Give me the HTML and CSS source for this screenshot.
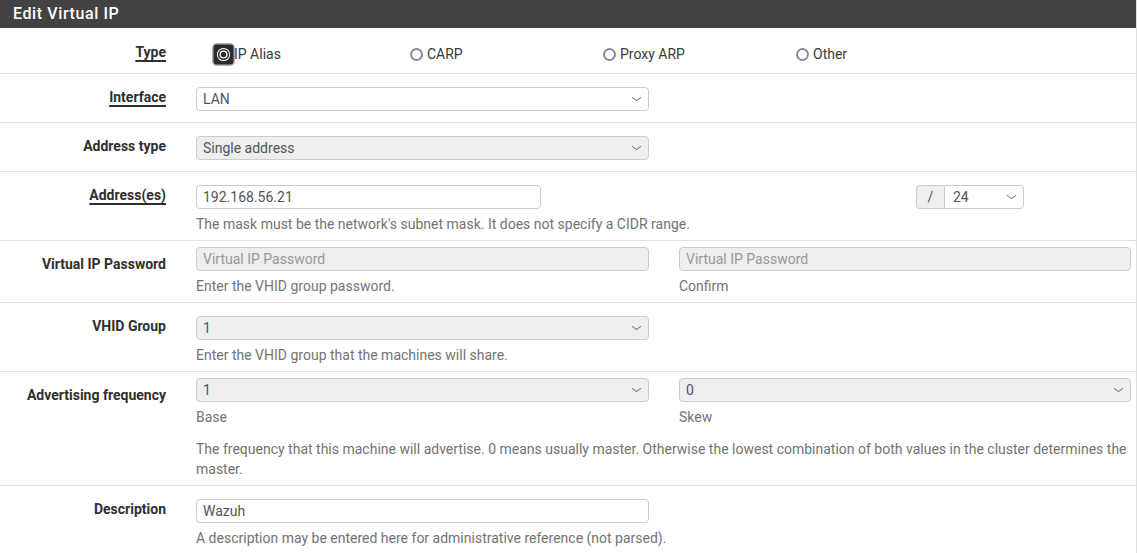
FILE: index.html
```html
<!DOCTYPE html>
<html>
<head>
<meta charset="utf-8">
<link rel="stylesheet" href="styles.css">
</head>
<body>
<div class="panel">
  <div class="panel-heading">Edit Virtual IP</div>

  <div class="row row-type">
    <div class="lbl lbl-type"><span class="req">Type</span></div>
    <div class="ctl ctl-type">
      <label class="radio"><svg class="dot-focus" width="23" height="23" viewBox="0 0 23 23"><rect x="0.75" y="0.75" width="21.5" height="21.5" rx="4" fill="#2b2b2b" stroke="#b3b3b3" stroke-width="1.5"/><circle cx="11.5" cy="11.5" r="6.6" fill="#fff"/><circle cx="11.5" cy="11.5" r="5.6" fill="#2b2b2b"/><circle cx="11.5" cy="11.5" r="4" fill="#fff"/><circle cx="11.5" cy="11.5" r="2.7" fill="#2b2b2b"/></svg>IP Alias</label>
      <label class="radio"><span class="dot"></span>CARP</label>
      <label class="radio"><span class="dot"></span>Proxy ARP</label>
      <label class="radio"><span class="dot"></span>Other</label>
    </div>
  </div>

  <div class="row">
    <div class="lbl"><span class="req">Interface</span></div>
    <div class="ctl">
      <div class="one">
        <div class="field select">LAN</div>
      </div>
      <div class="gap"></div>
    </div>
  </div>

  <div class="row">
    <div class="lbl">Address type</div>
    <div class="ctl">
      <div class="one">
        <div class="field select disabled">Single address</div>
      </div>
      <div class="gap"></div>
    </div>
  </div>

  <div class="row">
    <div class="lbl"><span class="req">Address(es)</span></div>
    <div class="ctl">
      <div class="addr">
        <div class="field addr-input">192.168.56.21</div>
        <div class="mask">
          <span class="addon">/</span>
          <div class="field select mask-select">24</div>
        </div>
      </div>
      <div class="help">The mask must be the network's subnet mask. It does not specify a CIDR range.</div>
    </div>
  </div>

  <div class="row">
    <div class="lbl">Virtual IP Password</div>
    <div class="ctl ctl-tight">
      <div class="two">
        <div>
          <div class="field disabled placeholder">Virtual IP Password</div>
          <div class="help">Enter the VHID group password.</div>
        </div>
        <div>
          <div class="field disabled placeholder">Virtual IP Password</div>
          <div class="help">Confirm</div>
        </div>
      </div>
    </div>
  </div>

  <div class="row">
    <div class="lbl">VHID Group</div>
    <div class="ctl">
      <div class="one">
        <div class="field select disabled">1</div>
      </div>
      <div class="help">Enter the VHID group that the machines will share.</div>
    </div>
  </div>

  <div class="row">
    <div class="lbl">Advertising frequency</div>
    <div class="ctl ctl-tight">
      <div class="two">
        <div>
          <div class="field select disabled">1</div>
          <div class="help">Base</div>
        </div>
        <div>
          <div class="field select disabled">0</div>
          <div class="help">Skew</div>
        </div>
      </div>
      <div class="help help-wide">The frequency that this machine will advertise. 0 means usually master. Otherwise the lowest combination of both values in the cluster determines the master.</div>
    </div>
  </div>

  <div class="row">
    <div class="lbl">Description</div>
    <div class="ctl">
      <div class="one">
        <div class="field">Wazuh</div>
      </div>
      <div class="help">A description may be entered here for administrative reference (not parsed).</div>
    </div>
  </div>
</div>
</body>
</html>
```

FILE: styles.css
```css
* { box-sizing: border-box; }

html, body {
  margin: 0;
  padding: 0;
  background: #fff;
}

body {
  font-family: Roboto, "Liberation Sans", sans-serif;
  font-size: 14px;
  color: #333;
  overflow: hidden;
}

.panel {
  width: 1137px;
  border-right: 1px solid #ddd;
  min-height: 553px;
}

.panel-heading {
  height: 28px;
  background: #424242;
  color: #fff;
  font-size: 16px;
  font-weight: 500;
  letter-spacing: 0.6px;
  line-height: 28px;
  padding-left: 13px;
}

.row {
  display: grid;
  grid-template-columns: 196px 1fr;
  border-top: 1px solid #e3e3e3;
  padding-bottom: 6px;
}

.row-type {
  border-top: none;
  padding-bottom: 7px;
}

.lbl {
  padding: 13px 30px 0 0;
  text-align: right;
  font-weight: 700;
  line-height: 20px;
  color: #2f2f2f;
}

.lbl-type { padding-top: 14px; }

.req {
  text-decoration: underline;
  text-decoration-thickness: 1.5px;
  text-underline-offset: 3px;
}

.ctl {
  padding-top: 13px;
}

.ctl-tight { padding-top: 6px; }

.ctl-type {
  display: flex;
  padding-left: 21px;
  height: 38px;
  align-items: flex-end;
}

.radio {
  display: flex;
  align-items: center;
  width: 193px;
  height: 24px;
  line-height: 24px;
  color: #3a3a3a;
}

.dot {
  width: 13px;
  height: 13px;
  margin-right: 4px;
  border: 2px solid #8a8a96;
  border-radius: 50%;
  background: #fff;
  flex: none;
}

.dot-focus {
  flex: none;
  margin-left: -5px;
  margin-right: -1px;
}

.one { width: 453px; }

.gap { height: 5px; }

.two {
  display: grid;
  grid-template-columns: 453px 452px;
  column-gap: 30px;
}

.field {
  position: relative;
  height: 24px;
  line-height: 22px;
  border: 1px solid #ccc;
  border-radius: 4px;
  padding: 0 6px;
  color: #555;
  background: #fff;
  white-space: nowrap;
}

.field.disabled { background: #eee; }

.field.placeholder { color: #999; }

.select::after {
  content: "";
  position: absolute;
  right: 8px;
  top: 6px;
  width: 6px;
  height: 6px;
  border-right: 1px solid #6a6a6a;
  border-bottom: 1px solid #6a6a6a;
  transform: scaleY(0.7) rotate(45deg);
}

.help {
  margin-top: 5px;
  line-height: 20px;
  color: #737373;
}

.help-wide {
  margin-top: 12px;
  width: 935px;
}

.addr {
  display: flex;
}

.addr-input { width: 345px; }

.mask {
  display: flex;
  margin-left: 375px;
}

.addon {
  width: 28px;
  height: 24px;
  line-height: 22px;
  text-align: center;
  background: #eee;
  border: 1px solid #ccc;
  border-right: none;
  border-radius: 4px 0 0 4px;
  color: #555;
}

.mask-select {
  width: 80px;
  border-radius: 0 4px 4px 0;
  padding-left: 8px;
}
```
